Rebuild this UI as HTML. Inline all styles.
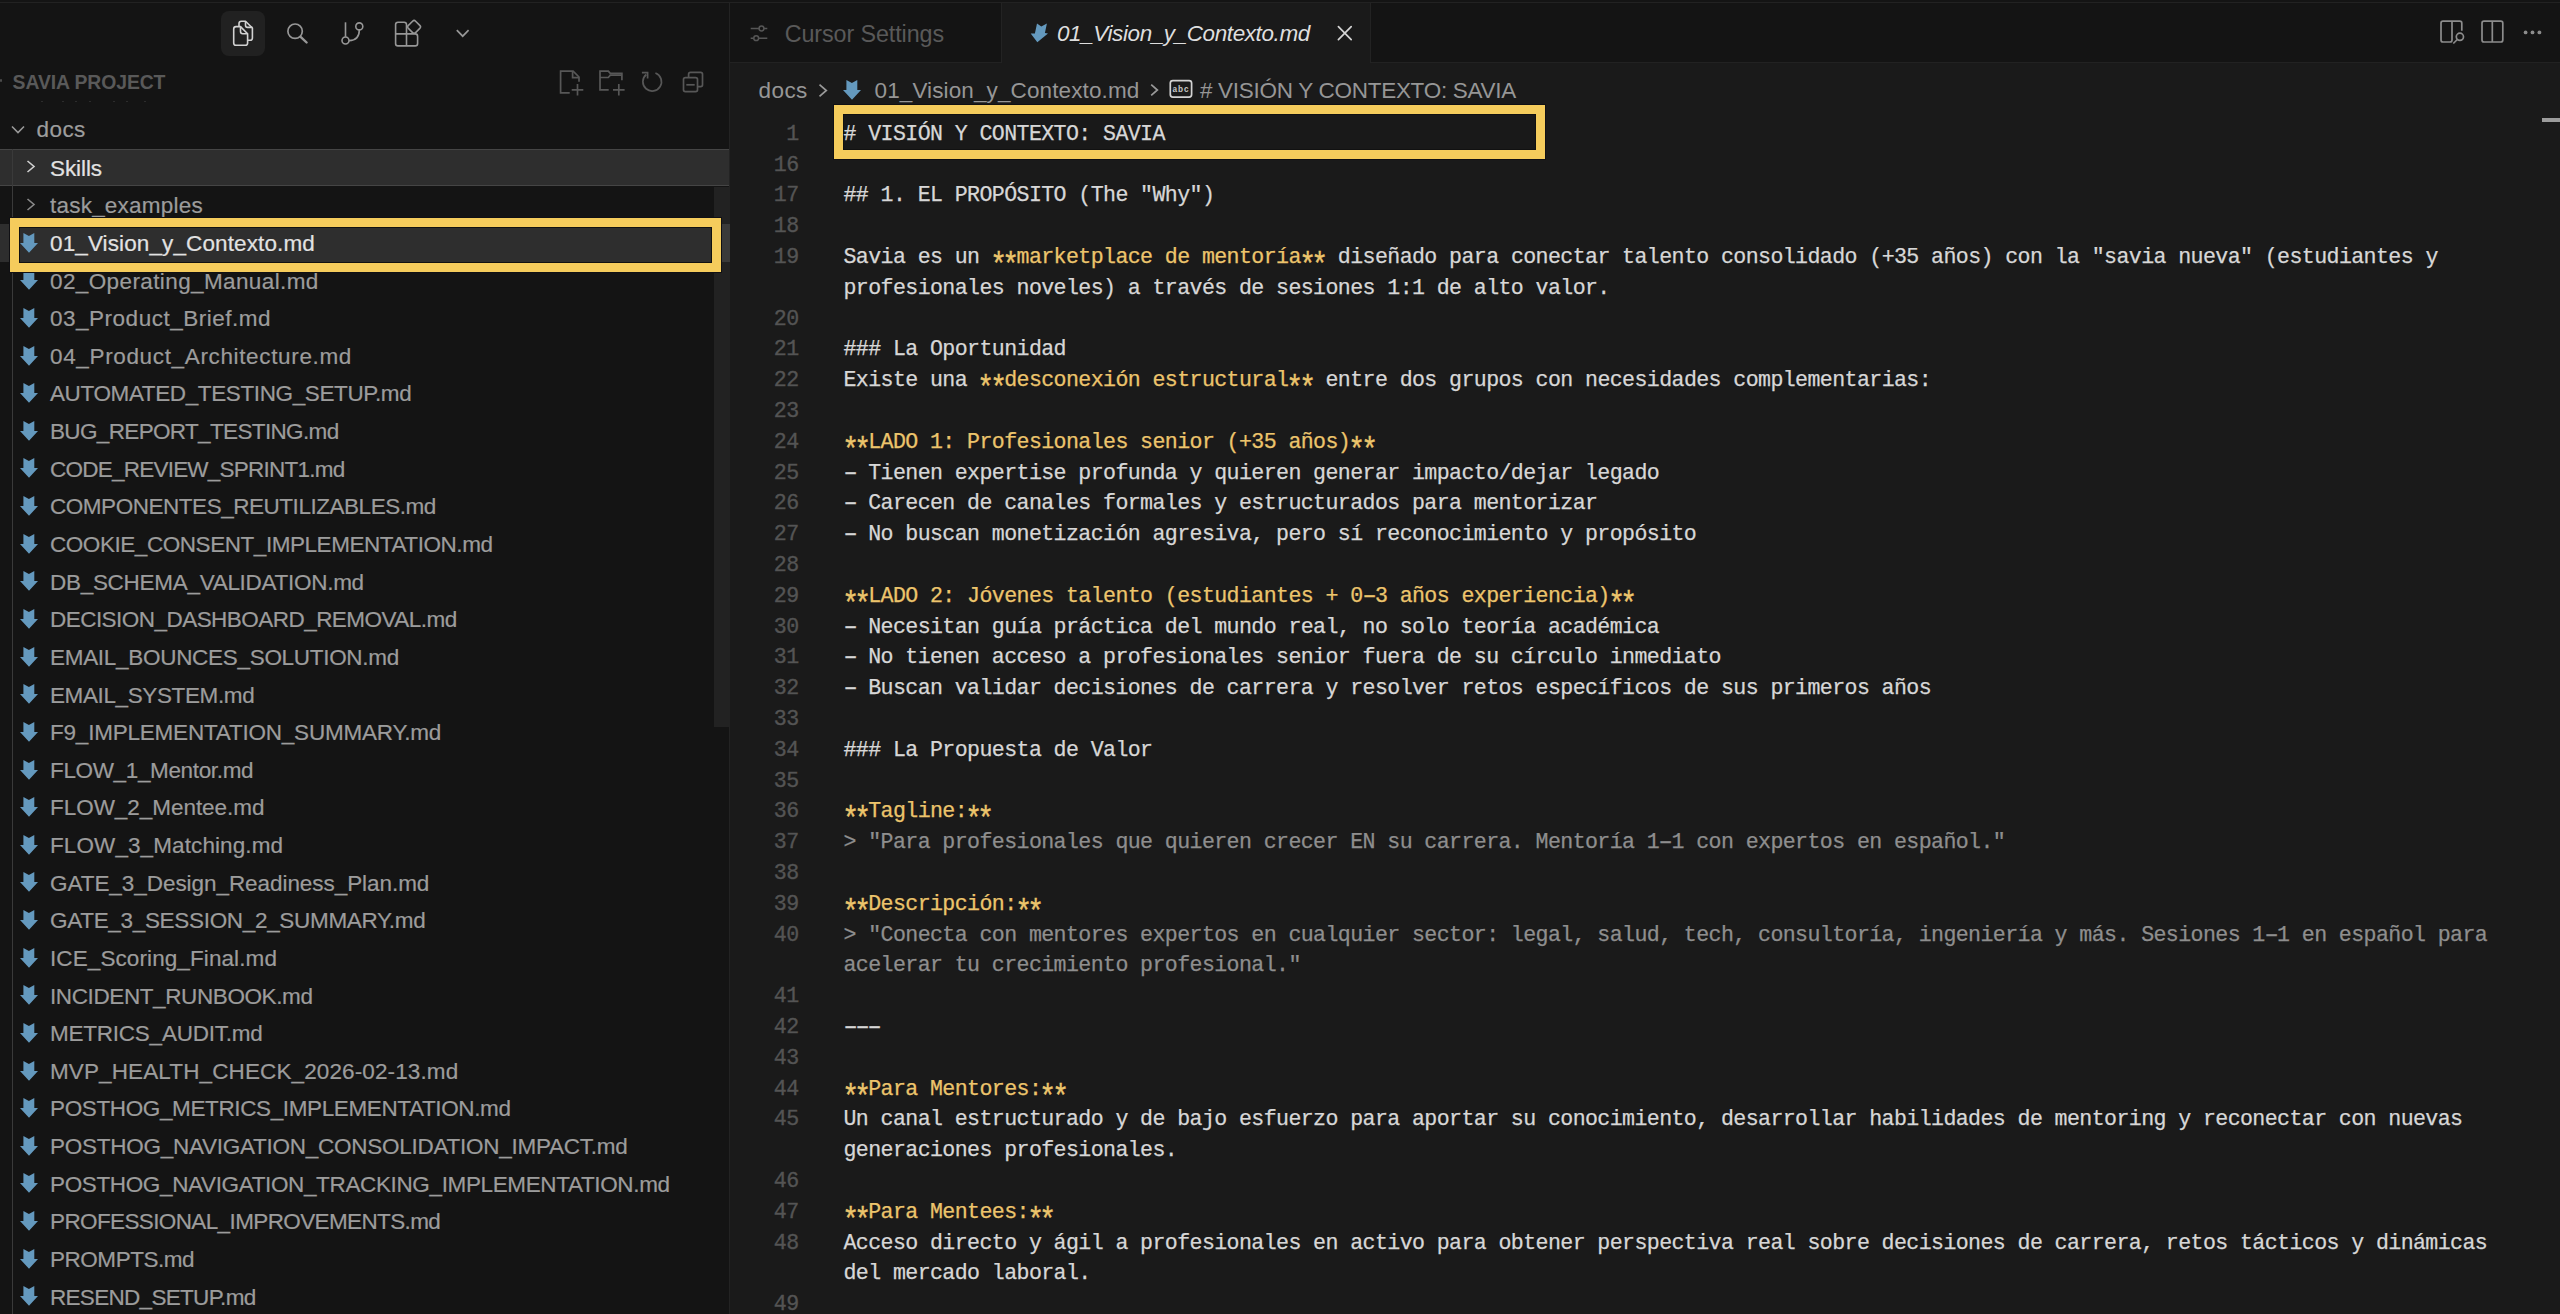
<!DOCTYPE html><html><head><meta charset="utf-8"><title>Cursor</title><style>
html,body{margin:0;padding:0;}
body{width:2560px;height:1314px;overflow:hidden;background:#141414;position:relative;font-family:"Liberation Sans",sans-serif;}
.a{position:absolute;}
.sbt{position:absolute;font-size:22px;line-height:26px;white-space:pre;color:#9c9c9c;-webkit-text-stroke-width:0.2px;}
.code{position:absolute;left:843.5px;font-family:"Liberation Mono",monospace;font-size:21.6px;letter-spacing:-0.6px;line-height:30.8px;height:30.8px;white-space:pre;color:#d7d7d7;-webkit-text-stroke-width:0.25px;}
.ln{position:absolute;left:700px;width:98.5px;text-align:right;font-family:"Liberation Mono",monospace;font-size:21.6px;letter-spacing:-0.6px;line-height:30.8px;white-space:pre;color:#545454;-webkit-text-stroke-width:0.35px;}
.y{color:#ecc46c;}
.st{font-style:normal;display:inline-block;transform-origin:50% 9.2px;transform:translateY(6px) scale(1.3,1.5);}
.hy{font-style:normal;display:inline-block;transform:scaleX(1.72);}
.q{color:#8e8e8e;}
svg{position:absolute;overflow:visible;}
</style></head><body>
<div class="a" style="left:0;top:2px;width:2560px;height:1px;background:#222"></div>
<div class="a" style="left:730px;top:63px;width:1830px;height:1251px;background:#1a1a1a"></div>
<div class="a" style="left:729px;top:3px;width:1px;height:1311px;background:#232323"></div>
<div class="a" style="left:730px;top:62px;width:1830px;height:1px;background:#222"></div>
<div class="a" style="left:1002px;top:3px;width:368px;height:60px;background:#1a1a1a"></div>
<div class="a" style="left:1001px;top:3px;width:1px;height:60px;background:#232323"></div>
<div class="a" style="left:1370px;top:3px;width:1px;height:60px;background:#232323"></div>
<div class="a" style="left:221px;top:11px;width:44px;height:45px;border-radius:8px;background:#212121"></div>
<svg style="left:225px;top:15px" width="35" height="35" viewBox="225 15 35 35"><g fill="none" stroke="#d2d2d2" stroke-width="1.6" stroke-linejoin="round"><path d="M239 26 V23.5 Q239 21.2 241.3 21.2 H245.5 L252.4 28 V38 Q252.4 40.3 250.1 40.3 H247.6"/><path d="M245.5 21.2 V25.3 Q245.5 27.4 247.6 27.4 H252.4"/><path d="M240.5 26.6 H236 Q233.7 26.6 233.7 28.9 V43 Q233.7 45.3 236 45.3 H245.3 Q247.6 45.3 247.6 43 V33.8 Z" fill="#212121"/><path d="M240.5 26.6 V31.6 Q240.5 33.8 242.7 33.8 H247.6"/></g></svg>
<svg style="left:280px;top:15px" width="35" height="35" viewBox="280 15 35 35"><g fill="none" stroke="#979797"><circle cx="295.1" cy="31.2" r="7.2" stroke-width="1.7"/><path d="M300.6 36.8 L306.6 42.5" stroke-width="2.4" stroke-linecap="round"/></g></svg>
<svg style="left:335px;top:15px" width="35" height="35" viewBox="335 15 35 35"><g fill="none" stroke="#979797" stroke-width="1.6"><path d="M345.5 22.3 V36.8"/><circle cx="345.5" cy="40.5" r="3.5"/><circle cx="359.3" cy="26.4" r="3.5"/><path d="M359.3 29.9 Q359.3 40.2 349 40.6"/></g></svg>
<svg style="left:390px;top:15px" width="35" height="35" viewBox="390 15 35 35"><g fill="none" stroke="#979797" stroke-width="1.6" stroke-linejoin="round" transform="translate(0.3 0.8)"><path d="M406.2 33.1 V23.8 Q406.2 21.4 403.8 21.4 H397.7 Q395.3 21.4 395.3 23.8 V42.7 Q395.3 45.1 397.7 45.1 H414.9 Q417.3 45.1 417.3 42.7 V35.5 Q417.3 33.1 414.9 33.1 H395.3"/><path d="M406.2 33.1 V45.1"/><path d="M412.3 20.4 Q413.8 18.9 415.3 20.4 L419.5 24.6 Q421 26.1 419.5 27.6 L415.3 31.8 Q413.8 33.3 412.3 31.8 L408.1 27.6 Q406.6 26.1 408.1 24.6 Z"/></g></svg>
<svg style="left:450px;top:20px" width="25" height="25" viewBox="450 20 25 25"><path d="M456.8 30.2 L462.7 36.2 L468.6 30.2" fill="none" stroke="#979797" stroke-width="1.7"/></svg>
<div class="a" style="left:12.6px;top:69.3px;font-size:19.4px;font-weight:bold;line-height:26px;color:#595959;letter-spacing:-0.100px;white-space:pre">SAVIA PROJECT</div>
<div class="a" style="left:0;top:79px;width:2px;height:2.5px;border-radius:1px;background:#4c4c4c"></div>
<div class="a" style="left:41px;top:101px;width:2px;height:1px;background:#2c2c2c"></div>
<div class="a" style="left:62px;top:101px;width:2px;height:1px;background:#2c2c2c"></div>
<div class="a" style="left:75px;top:101px;width:2px;height:1px;background:#2c2c2c"></div>
<div class="a" style="left:88.6px;top:101px;width:2px;height:1px;background:#2c2c2c"></div>
<div class="a" style="left:113px;top:101px;width:2px;height:1px;background:#2c2c2c"></div>
<div class="a" style="left:126px;top:101px;width:2px;height:1px;background:#2c2c2c"></div>
<div class="a" style="left:144px;top:101px;width:2px;height:1px;background:#2c2c2c"></div>
<svg style="left:555px;top:65px" width="35" height="35" viewBox="555 65 35 35"><g fill="none" stroke="#575757" stroke-width="1.7"><path d="M569.7 92.9 H560.6 V71.1 H573.1 L579 77 V81.7"/><path d="M572.6 71.1 V77.6 H579"/><path d="M571.7 89.8 H583.3 M577.5 84.1 V95.6"/></g></svg>
<svg style="left:595px;top:65px" width="35" height="35" viewBox="595 65 35 35"><g fill="none" stroke="#575757" stroke-width="1.7"><path d="M608.7 89.8 H600 V71.1 H608.3 L610.3 73.3 H621.9 V80.2"/><path d="M600 77.5 H608.3 L610.3 75.2 H621.9"/><path d="M613 89.8 H624.6 M618.8 84.1 V95.6"/></g></svg>
<svg style="left:635px;top:65px" width="35" height="35" viewBox="635 65 35 35"><g fill="none" stroke="#575757" stroke-width="1.7"><path d="M655.4 73 A9.3 9.3 0 1 1 646.3 74.5"/><path d="M641.9 72.6 H647.6 V78.6"/></g></svg>
<svg style="left:678px;top:65px" width="35" height="35" viewBox="678 65 35 35"><g fill="none" stroke="#575757" stroke-width="1.7" stroke-linejoin="round"><path d="M688.6 77.6 V74.3 Q688.6 72.4 690.5 72.4 H700.6 Q702.5 72.4 702.5 74.3 V84.8 Q702.5 86.7 700.6 86.7 H697.5"/><rect x="683.5" y="77.6" width="14" height="14.1" rx="1.9"/><path d="M686.3 84.8 H694.7"/></g></svg>
<svg style="left:745px;top:20px" width="30" height="25" viewBox="745 20 30 25"><g fill="none" stroke="#565656" stroke-width="1.5"><path d="M750.7 28.5 H759 M764 28.5 H767.3 M750.7 38.2 H753.7 M758.7 38.2 H767.3"/><circle cx="761.5" cy="28.5" r="2.4"/><circle cx="756.2" cy="38.2" r="2.4"/></g></svg>
<div class="a" style="left:784.7px;top:20.1px;font-size:23.3px;line-height:28px;color:#595959;letter-spacing:-0.086px;white-space:pre">Cursor Settings</div>
<svg style="left:1025px;top:18px" width="30" height="30" viewBox="1025 18 30 30"><path d="M1037 23.4 L1041.3 26.5 L1046.9 23.4 L1044.9 33.1 L1048 33.4 L1037.3 42.2 L1030.7 33.6 L1034.9 33.5 Z" fill="#6499be"/></svg>
<div class="a" style="left:1057px;top:20px;font-size:22.5px;font-style:italic;line-height:28px;color:#dedede;letter-spacing:-0.409px;white-space:pre">01_Vision_y_Contexto.md</div>
<svg style="left:1330px;top:20px" width="30" height="30" viewBox="1330 20 30 30"><path d="M1338.4 26.6 L1351.2 39.6 M1351.2 26.6 L1338.4 39.6" stroke="#d4d4d4" stroke-width="1.7" stroke-linecap="round"/></svg>
<svg style="left:2435px;top:15px" width="35" height="35" viewBox="2435 15 35 35"><g fill="none" stroke="#8c8c8c" stroke-width="1.7" stroke-linejoin="round"><path d="M2461.8 30.8 V23.2 Q2461.8 21.2 2459.8 21.2 H2443 Q2441 21.2 2441 23.2 V40 Q2441 42 2443 42 H2450 Q2452 42 2452 40 V21.2"/><circle cx="2459.9" cy="36.8" r="3.6"/><path d="M2457.3 39.5 L2453.3 43.5"/></g></svg>
<svg style="left:2475px;top:15px" width="35" height="35" viewBox="2475 15 35 35"><g fill="none" stroke="#8c8c8c" stroke-width="1.7"><rect x="2482" y="21.2" width="20.8" height="20.8" rx="2"/><path d="M2492.3 21.2 V42"/></g></svg>
<svg style="left:2515px;top:25px" width="35" height="15" viewBox="2515 25 35 15"><g fill="#8c8c8c"><circle cx="2525.6" cy="32.4" r="1.9"/><circle cx="2532.5" cy="32.4" r="1.9"/><circle cx="2539.4" cy="32.4" r="1.9"/></g></svg>
<div class="a" style="left:758.5px;top:76.5px;font-size:22.5px;line-height:28px;color:#969696;letter-spacing:0.433px;white-space:pre">docs</div>
<svg style="left:815px;top:80px" width="15" height="20" viewBox="815 80 15 20"><path d="M819.5 84.7 L826.3 90.5 L819.5 96.3" fill="none" stroke="#999" stroke-width="1.7"/></svg>
<svg width="18" height="20" viewBox="0 0 18 20" style="left:843.4px;top:79.6px"><path d="M3.4 0 L8.9 3.1 L14.3 0 L14.3 10.1 L18 10.1 L9 19.8 L0 10.1 L3.4 10.1 Z" fill="#6499be"/></svg>
<div class="a" style="left:874.5px;top:76.5px;font-size:22.5px;line-height:28px;color:#969696;letter-spacing:0.114px;white-space:pre">01_Vision_y_Contexto.md</div>
<svg style="left:1145px;top:80px" width="15" height="20" viewBox="1145 80 15 20"><path d="M1151.2 84.6 L1157.4 90 L1151.2 95.4" fill="none" stroke="#999" stroke-width="1.7"/></svg>
<svg style="left:1165px;top:75px" width="32" height="28" viewBox="1165 75 32 28"><g><rect x="1170.3" y="80.6" width="21.3" height="16.5" rx="2.5" fill="none" stroke="#d2d2d2" stroke-width="1.7"/><text x="1181" y="91.6" font-family="Liberation Sans" font-weight="bold" font-size="8.2" fill="#c8c8c8" text-anchor="middle" letter-spacing="1">abc</text></g></svg>
<div class="a" style="left:1199.9px;top:76.5px;font-size:22.5px;line-height:28px;color:#969696;letter-spacing:-0.280px;white-space:pre"># VISIÓN Y CONTEXTO: SAVIA</div>
<div class="a" style="left:2542px;top:118px;width:18px;height:4px;background:#9c9c9c"></div>
<div class="a" style="left:834px;top:105px;width:711px;height:54px;box-sizing:border-box;border:9px solid #f5cc5c;background:#191919;box-shadow:inset 0 0 0 1px #111,0 0 0 1px #101014"></div>
<div class="ln" style="top:118.85px">1</div>
<div class="code" style="top:118.85px"># VISIÓN Y CONTEXTO: SAVIA</div>
<div class="ln" style="top:149.65px">16</div>
<div class="ln" style="top:180.45px">17</div>
<div class="code" style="top:180.45px">## 1. EL PROPÓSITO (The &quot;Why&quot;)</div>
<div class="ln" style="top:211.25px">18</div>
<div class="ln" style="top:242.05px">19</div>
<div class="code" style="top:242.05px">Savia es un <span class="y"><i class="st">*</i><i class="st">*</i>marketplace de mentoría<i class="st">*</i><i class="st">*</i></span> diseñado para conectar talento consolidado (+35 años) con la &quot;savia nueva&quot; (estudiantes y</div>
<div class="code" style="top:272.85px">profesionales noveles) a través de sesiones 1:1 de alto valor.</div>
<div class="ln" style="top:303.65px">20</div>
<div class="ln" style="top:334.45px">21</div>
<div class="code" style="top:334.45px">### La Oportunidad</div>
<div class="ln" style="top:365.25px">22</div>
<div class="code" style="top:365.25px">Existe una <span class="y"><i class="st">*</i><i class="st">*</i>desconexión estructural<i class="st">*</i><i class="st">*</i></span> entre dos grupos con necesidades complementarias:</div>
<div class="ln" style="top:396.05px">23</div>
<div class="ln" style="top:426.85px">24</div>
<div class="code" style="top:426.85px"><span class="y"><i class="st">*</i><i class="st">*</i>LADO 1: Profesionales senior (+35 años)<i class="st">*</i><i class="st">*</i></span></div>
<div class="ln" style="top:457.65px">25</div>
<div class="code" style="top:457.65px"><i class="hy">-</i> Tienen expertise profunda y quieren generar impacto/dejar legado</div>
<div class="ln" style="top:488.45px">26</div>
<div class="code" style="top:488.45px"><i class="hy">-</i> Carecen de canales formales y estructurados para mentorizar</div>
<div class="ln" style="top:519.25px">27</div>
<div class="code" style="top:519.25px"><i class="hy">-</i> No buscan monetización agresiva, pero sí reconocimiento y propósito</div>
<div class="ln" style="top:550.05px">28</div>
<div class="ln" style="top:580.85px">29</div>
<div class="code" style="top:580.85px"><span class="y"><i class="st">*</i><i class="st">*</i>LADO 2: Jóvenes talento (estudiantes + 0<i class="hy">-</i>3 años experiencia)<i class="st">*</i><i class="st">*</i></span></div>
<div class="ln" style="top:611.65px">30</div>
<div class="code" style="top:611.65px"><i class="hy">-</i> Necesitan guía práctica del mundo real, no solo teoría académica</div>
<div class="ln" style="top:642.45px">31</div>
<div class="code" style="top:642.45px"><i class="hy">-</i> No tienen acceso a profesionales senior fuera de su círculo inmediato</div>
<div class="ln" style="top:673.25px">32</div>
<div class="code" style="top:673.25px"><i class="hy">-</i> Buscan validar decisiones de carrera y resolver retos específicos de sus primeros años</div>
<div class="ln" style="top:704.05px">33</div>
<div class="ln" style="top:734.85px">34</div>
<div class="code" style="top:734.85px">### La Propuesta de Valor</div>
<div class="ln" style="top:765.65px">35</div>
<div class="ln" style="top:796.45px">36</div>
<div class="code" style="top:796.45px"><span class="y"><i class="st">*</i><i class="st">*</i>Tagline:<i class="st">*</i><i class="st">*</i></span></div>
<div class="ln" style="top:827.25px">37</div>
<div class="code" style="top:827.25px"><span class="q">&gt; &quot;Para profesionales que quieren crecer EN su carrera. Mentoría 1<i class="hy">-</i>1 con expertos en español.&quot;</span></div>
<div class="ln" style="top:858.05px">38</div>
<div class="ln" style="top:888.85px">39</div>
<div class="code" style="top:888.85px"><span class="y"><i class="st">*</i><i class="st">*</i>Descripción:<i class="st">*</i><i class="st">*</i></span></div>
<div class="ln" style="top:919.65px">40</div>
<div class="code" style="top:919.65px"><span class="q">&gt; &quot;Conecta con mentores expertos en cualquier sector: legal, salud, tech, consultoría, ingeniería y más. Sesiones 1<i class="hy">-</i>1 en español para</span></div>
<div class="code" style="top:950.45px"><span class="q">acelerar tu crecimiento profesional.&quot;</span></div>
<div class="ln" style="top:981.25px">41</div>
<div class="ln" style="top:1012.05px">42</div>
<div class="code" style="top:1012.05px"><i class="hy">-</i><i class="hy">-</i><i class="hy">-</i></div>
<div class="ln" style="top:1042.85px">43</div>
<div class="ln" style="top:1073.65px">44</div>
<div class="code" style="top:1073.65px"><span class="y"><i class="st">*</i><i class="st">*</i>Para Mentores:<i class="st">*</i><i class="st">*</i></span></div>
<div class="ln" style="top:1104.45px">45</div>
<div class="code" style="top:1104.45px">Un canal estructurado y de bajo esfuerzo para aportar su conocimiento, desarrollar habilidades de mentoring y reconectar con nuevas</div>
<div class="code" style="top:1135.25px">generaciones profesionales.</div>
<div class="ln" style="top:1166.05px">46</div>
<div class="ln" style="top:1196.85px">47</div>
<div class="code" style="top:1196.85px"><span class="y"><i class="st">*</i><i class="st">*</i>Para Mentees:<i class="st">*</i><i class="st">*</i></span></div>
<div class="ln" style="top:1227.65px">48</div>
<div class="code" style="top:1227.65px">Acceso directo y ágil a profesionales en activo para obtener perspectiva real sobre decisiones de carrera, retos tácticos y dinámicas</div>
<div class="code" style="top:1258.45px">del mercado laboral.</div>
<div class="ln" style="top:1289.25px">49</div>
<div class="a" style="left:0;top:149px;width:729px;height:37px;background:#2e2e2e;border-top:1px solid #454545;border-bottom:1px solid #454545;box-sizing:border-box"></div>
<div class="a" style="left:713.5px;top:187px;width:16.5px;height:540px;background:#222"></div>
<div class="a" style="left:0;top:224px;width:729px;height:37.6px;background:#2e2e2e"></div>
<div class="a" style="left:713.5px;top:224px;width:16px;height:37.6px;background:#3a3a3a"></div>
<div class="a" style="left:12px;top:149px;width:1px;height:1165px;background:#3a3a3a"></div>
<svg width="14" height="10" style="left:11px;top:125px"><path d="M1 1.5 L7 7.5 L13 1.5" fill="none" stroke="#9a9a9a" stroke-width="1.6"/></svg>
<div class="sbt" style="left:36.5px;top:117.2px;font-size:22.5px;letter-spacing:0.433px;color:#9d9d9d">docs</div>
<svg width="10" height="14" style="left:26px;top:160px"><path d="M1.5 1 L8 6.5 L1.5 12" fill="none" stroke="#d0d0d0" stroke-width="1.6"/></svg>
<div class="sbt" style="left:50px;top:155.70px;font-size:22.5px;letter-spacing:-0.080px;color:#e2e2e2">Skills</div>
<svg width="10" height="14" style="left:26px;top:198px"><path d="M1.5 1 L8 6.5 L1.5 12" fill="none" stroke="#8a8a8a" stroke-width="1.6"/></svg>
<div class="sbt" style="left:50px;top:193.33px;font-size:22.5px;letter-spacing:0.217px;color:#9c9c9c">task_examples</div>
<svg width="18" height="20" viewBox="0 0 18 20" style="left:19.6px;top:232.7px"><path d="M3.4 0 L8.9 3.1 L14.3 0 L14.3 10.1 L18 10.1 L9 19.8 L0 10.1 L3.4 10.1 Z" fill="#6499be"/></svg>
<div class="sbt" style="left:50px;top:230.96px;font-size:22.5px;letter-spacing:0.114px;color:#e2e2e2">01_Vision_y_Contexto.md</div>
<svg width="18" height="20" viewBox="0 0 18 20" style="left:19.6px;top:270.3px"><path d="M3.4 0 L8.9 3.1 L14.3 0 L14.3 10.1 L18 10.1 L9 19.8 L0 10.1 L3.4 10.1 Z" fill="#6499be"/></svg>
<div class="sbt" style="left:50px;top:268.59px;font-size:22.5px;letter-spacing:0.390px;color:#9c9c9c">02_Operating_Manual.md</div>
<svg width="18" height="20" viewBox="0 0 18 20" style="left:19.6px;top:307.9px"><path d="M3.4 0 L8.9 3.1 L14.3 0 L14.3 10.1 L18 10.1 L9 19.8 L0 10.1 L3.4 10.1 Z" fill="#6499be"/></svg>
<div class="sbt" style="left:50px;top:306.22px;font-size:22.5px;letter-spacing:0.511px;color:#9c9c9c">03_Product_Brief.md</div>
<svg width="18" height="20" viewBox="0 0 18 20" style="left:19.6px;top:345.5px"><path d="M3.4 0 L8.9 3.1 L14.3 0 L14.3 10.1 L18 10.1 L9 19.8 L0 10.1 L3.4 10.1 Z" fill="#6499be"/></svg>
<div class="sbt" style="left:50px;top:343.85px;font-size:22.5px;letter-spacing:0.648px;color:#9c9c9c">04_Product_Architecture.md</div>
<svg width="18" height="20" viewBox="0 0 18 20" style="left:19.6px;top:383.2px"><path d="M3.4 0 L8.9 3.1 L14.3 0 L14.3 10.1 L18 10.1 L9 19.8 L0 10.1 L3.4 10.1 Z" fill="#6499be"/></svg>
<div class="sbt" style="left:50px;top:381.48px;font-size:22.5px;letter-spacing:-0.384px;color:#9c9c9c">AUTOMATED_TESTING_SETUP.md</div>
<svg width="18" height="20" viewBox="0 0 18 20" style="left:19.6px;top:420.8px"><path d="M3.4 0 L8.9 3.1 L14.3 0 L14.3 10.1 L18 10.1 L9 19.8 L0 10.1 L3.4 10.1 Z" fill="#6499be"/></svg>
<div class="sbt" style="left:50px;top:419.11px;font-size:22.5px;letter-spacing:-0.650px;color:#9c9c9c">BUG_REPORT_TESTING.md</div>
<svg width="18" height="20" viewBox="0 0 18 20" style="left:19.6px;top:458.4px"><path d="M3.4 0 L8.9 3.1 L14.3 0 L14.3 10.1 L18 10.1 L9 19.8 L0 10.1 L3.4 10.1 Z" fill="#6499be"/></svg>
<div class="sbt" style="left:50px;top:456.74px;font-size:22.5px;letter-spacing:-0.767px;color:#9c9c9c">CODE_REVIEW_SPRINT1.md</div>
<svg width="18" height="20" viewBox="0 0 18 20" style="left:19.6px;top:496.1px"><path d="M3.4 0 L8.9 3.1 L14.3 0 L14.3 10.1 L18 10.1 L9 19.8 L0 10.1 L3.4 10.1 Z" fill="#6499be"/></svg>
<div class="sbt" style="left:50px;top:494.37px;font-size:22.5px;letter-spacing:-0.463px;color:#9c9c9c">COMPONENTES_REUTILIZABLES.md</div>
<svg width="18" height="20" viewBox="0 0 18 20" style="left:19.6px;top:533.7px"><path d="M3.4 0 L8.9 3.1 L14.3 0 L14.3 10.1 L18 10.1 L9 19.8 L0 10.1 L3.4 10.1 Z" fill="#6499be"/></svg>
<div class="sbt" style="left:50px;top:532.00px;font-size:22.5px;letter-spacing:-0.445px;color:#9c9c9c">COOKIE_CONSENT_IMPLEMENTATION.md</div>
<svg width="18" height="20" viewBox="0 0 18 20" style="left:19.6px;top:571.3px"><path d="M3.4 0 L8.9 3.1 L14.3 0 L14.3 10.1 L18 10.1 L9 19.8 L0 10.1 L3.4 10.1 Z" fill="#6499be"/></svg>
<div class="sbt" style="left:50px;top:569.63px;font-size:22.5px;letter-spacing:-0.291px;color:#9c9c9c">DB_SCHEMA_VALIDATION.md</div>
<svg width="18" height="20" viewBox="0 0 18 20" style="left:19.6px;top:609.0px"><path d="M3.4 0 L8.9 3.1 L14.3 0 L14.3 10.1 L18 10.1 L9 19.8 L0 10.1 L3.4 10.1 Z" fill="#6499be"/></svg>
<div class="sbt" style="left:50px;top:607.26px;font-size:22.5px;letter-spacing:-0.536px;color:#9c9c9c">DECISION_DASHBOARD_REMOVAL.md</div>
<svg width="18" height="20" viewBox="0 0 18 20" style="left:19.6px;top:646.6px"><path d="M3.4 0 L8.9 3.1 L14.3 0 L14.3 10.1 L18 10.1 L9 19.8 L0 10.1 L3.4 10.1 Z" fill="#6499be"/></svg>
<div class="sbt" style="left:50px;top:644.89px;font-size:22.5px;letter-spacing:-0.296px;color:#9c9c9c">EMAIL_BOUNCES_SOLUTION.md</div>
<svg width="18" height="20" viewBox="0 0 18 20" style="left:19.6px;top:684.2px"><path d="M3.4 0 L8.9 3.1 L14.3 0 L14.3 10.1 L18 10.1 L9 19.8 L0 10.1 L3.4 10.1 Z" fill="#6499be"/></svg>
<div class="sbt" style="left:50px;top:682.52px;font-size:22.5px;letter-spacing:-0.386px;color:#9c9c9c">EMAIL_SYSTEM.md</div>
<svg width="18" height="20" viewBox="0 0 18 20" style="left:19.6px;top:721.9px"><path d="M3.4 0 L8.9 3.1 L14.3 0 L14.3 10.1 L18 10.1 L9 19.8 L0 10.1 L3.4 10.1 Z" fill="#6499be"/></svg>
<div class="sbt" style="left:50px;top:720.15px;font-size:22.5px;letter-spacing:-0.215px;color:#9c9c9c">F9_IMPLEMENTATION_SUMMARY.md</div>
<svg width="18" height="20" viewBox="0 0 18 20" style="left:19.6px;top:759.5px"><path d="M3.4 0 L8.9 3.1 L14.3 0 L14.3 10.1 L18 10.1 L9 19.8 L0 10.1 L3.4 10.1 Z" fill="#6499be"/></svg>
<div class="sbt" style="left:50px;top:757.78px;font-size:22.5px;letter-spacing:-0.353px;color:#9c9c9c">FLOW_1_Mentor.md</div>
<svg width="18" height="20" viewBox="0 0 18 20" style="left:19.6px;top:797.1px"><path d="M3.4 0 L8.9 3.1 L14.3 0 L14.3 10.1 L18 10.1 L9 19.8 L0 10.1 L3.4 10.1 Z" fill="#6499be"/></svg>
<div class="sbt" style="left:50px;top:795.41px;font-size:22.5px;letter-spacing:-0.040px;color:#9c9c9c">FLOW_2_Mentee.md</div>
<svg width="18" height="20" viewBox="0 0 18 20" style="left:19.6px;top:834.7px"><path d="M3.4 0 L8.9 3.1 L14.3 0 L14.3 10.1 L18 10.1 L9 19.8 L0 10.1 L3.4 10.1 Z" fill="#6499be"/></svg>
<div class="sbt" style="left:50px;top:833.04px;font-size:22.5px;letter-spacing:0.100px;color:#9c9c9c">FLOW_3_Matching.md</div>
<svg width="18" height="20" viewBox="0 0 18 20" style="left:19.6px;top:872.4px"><path d="M3.4 0 L8.9 3.1 L14.3 0 L14.3 10.1 L18 10.1 L9 19.8 L0 10.1 L3.4 10.1 Z" fill="#6499be"/></svg>
<div class="sbt" style="left:50px;top:870.67px;font-size:22.5px;letter-spacing:-0.057px;color:#9c9c9c">GATE_3_Design_Readiness_Plan.md</div>
<svg width="18" height="20" viewBox="0 0 18 20" style="left:19.6px;top:910.0px"><path d="M3.4 0 L8.9 3.1 L14.3 0 L14.3 10.1 L18 10.1 L9 19.8 L0 10.1 L3.4 10.1 Z" fill="#6499be"/></svg>
<div class="sbt" style="left:50px;top:908.30px;font-size:22.5px;letter-spacing:-0.315px;color:#9c9c9c">GATE_3_SESSION_2_SUMMARY.md</div>
<svg width="18" height="20" viewBox="0 0 18 20" style="left:19.6px;top:947.6px"><path d="M3.4 0 L8.9 3.1 L14.3 0 L14.3 10.1 L18 10.1 L9 19.8 L0 10.1 L3.4 10.1 Z" fill="#6499be"/></svg>
<div class="sbt" style="left:50px;top:945.93px;font-size:22.5px;letter-spacing:0.095px;color:#9c9c9c">ICE_Scoring_Final.md</div>
<svg width="18" height="20" viewBox="0 0 18 20" style="left:19.6px;top:985.3px"><path d="M3.4 0 L8.9 3.1 L14.3 0 L14.3 10.1 L18 10.1 L9 19.8 L0 10.1 L3.4 10.1 Z" fill="#6499be"/></svg>
<div class="sbt" style="left:50px;top:983.56px;font-size:22.5px;letter-spacing:-0.394px;color:#9c9c9c">INCIDENT_RUNBOOK.md</div>
<svg width="18" height="20" viewBox="0 0 18 20" style="left:19.6px;top:1022.9px"><path d="M3.4 0 L8.9 3.1 L14.3 0 L14.3 10.1 L18 10.1 L9 19.8 L0 10.1 L3.4 10.1 Z" fill="#6499be"/></svg>
<div class="sbt" style="left:50px;top:1021.19px;font-size:22.5px;letter-spacing:-0.233px;color:#9c9c9c">METRICS_AUDIT.md</div>
<svg width="18" height="20" viewBox="0 0 18 20" style="left:19.6px;top:1060.5px"><path d="M3.4 0 L8.9 3.1 L14.3 0 L14.3 10.1 L18 10.1 L9 19.8 L0 10.1 L3.4 10.1 Z" fill="#6499be"/></svg>
<div class="sbt" style="left:50px;top:1058.82px;font-size:22.5px;letter-spacing:0.117px;color:#9c9c9c">MVP_HEALTH_CHECK_2026-02-13.md</div>
<svg width="18" height="20" viewBox="0 0 18 20" style="left:19.6px;top:1098.2px"><path d="M3.4 0 L8.9 3.1 L14.3 0 L14.3 10.1 L18 10.1 L9 19.8 L0 10.1 L3.4 10.1 Z" fill="#6499be"/></svg>
<div class="sbt" style="left:50px;top:1096.45px;font-size:22.5px;letter-spacing:-0.375px;color:#9c9c9c">POSTHOG_METRICS_IMPLEMENTATION.md</div>
<svg width="18" height="20" viewBox="0 0 18 20" style="left:19.6px;top:1135.8px"><path d="M3.4 0 L8.9 3.1 L14.3 0 L14.3 10.1 L18 10.1 L9 19.8 L0 10.1 L3.4 10.1 Z" fill="#6499be"/></svg>
<div class="sbt" style="left:50px;top:1134.08px;font-size:22.5px;letter-spacing:-0.259px;color:#9c9c9c">POSTHOG_NAVIGATION_CONSOLIDATION_IMPACT.md</div>
<svg width="18" height="20" viewBox="0 0 18 20" style="left:19.6px;top:1173.4px"><path d="M3.4 0 L8.9 3.1 L14.3 0 L14.3 10.1 L18 10.1 L9 19.8 L0 10.1 L3.4 10.1 Z" fill="#6499be"/></svg>
<div class="sbt" style="left:50px;top:1171.71px;font-size:22.5px;letter-spacing:-0.361px;color:#9c9c9c">POSTHOG_NAVIGATION_TRACKING_IMPLEMENTATION.md</div>
<svg width="18" height="20" viewBox="0 0 18 20" style="left:19.6px;top:1211.0px"><path d="M3.4 0 L8.9 3.1 L14.3 0 L14.3 10.1 L18 10.1 L9 19.8 L0 10.1 L3.4 10.1 Z" fill="#6499be"/></svg>
<div class="sbt" style="left:50px;top:1209.34px;font-size:22.5px;letter-spacing:-0.619px;color:#9c9c9c">PROFESSIONAL_IMPROVEMENTS.md</div>
<svg width="18" height="20" viewBox="0 0 18 20" style="left:19.6px;top:1248.7px"><path d="M3.4 0 L8.9 3.1 L14.3 0 L14.3 10.1 L18 10.1 L9 19.8 L0 10.1 L3.4 10.1 Z" fill="#6499be"/></svg>
<div class="sbt" style="left:50px;top:1246.97px;font-size:22.5px;letter-spacing:-0.467px;color:#9c9c9c">PROMPTS.md</div>
<svg width="18" height="20" viewBox="0 0 18 20" style="left:19.6px;top:1286.3px"><path d="M3.4 0 L8.9 3.1 L14.3 0 L14.3 10.1 L18 10.1 L9 19.8 L0 10.1 L3.4 10.1 Z" fill="#6499be"/></svg>
<div class="sbt" style="left:50px;top:1284.60px;font-size:22.5px;letter-spacing:-0.693px;color:#9c9c9c">RESEND_SETUP.md</div>
<div class="a" style="left:10px;top:218px;width:711px;height:54px;box-sizing:border-box;border:9px solid #f5cc5c;box-shadow:inset 0 0 0 1px #111,0 0 0 1px #101014"></div>
</body></html>
